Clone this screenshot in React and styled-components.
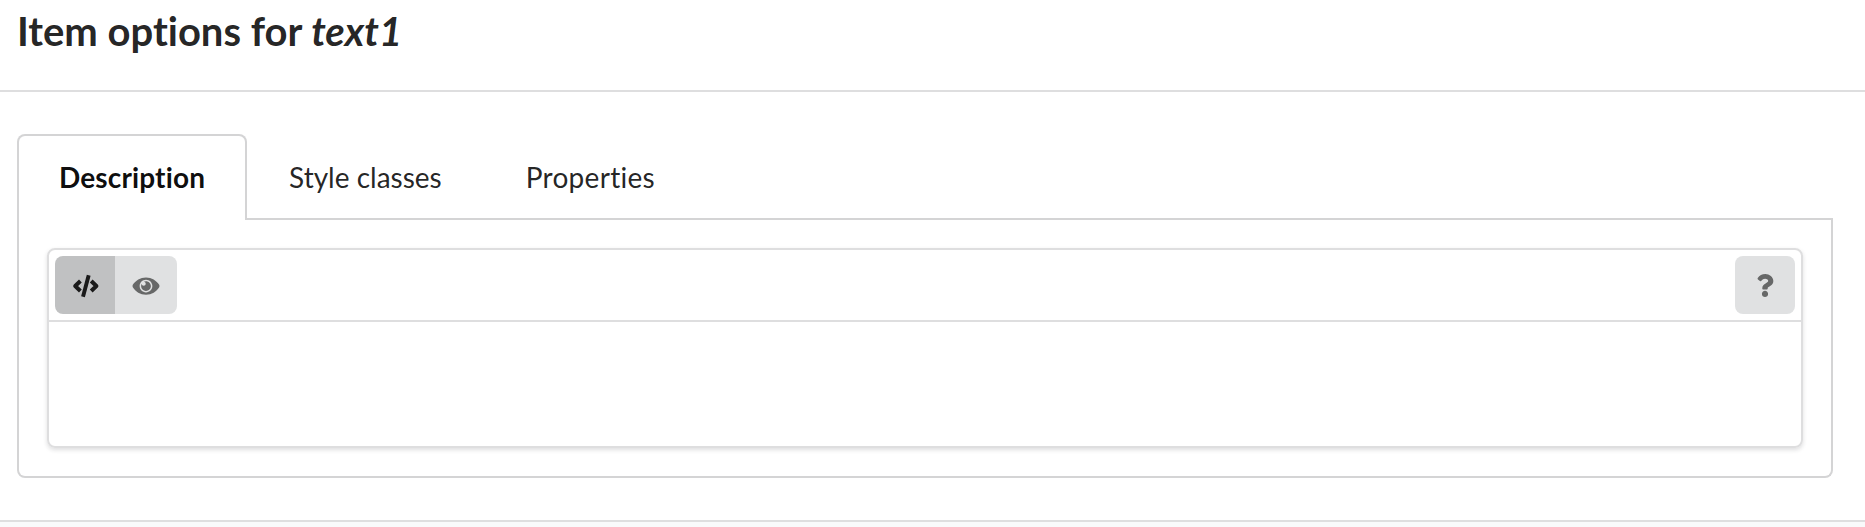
import React from "react";
import styled, { createGlobalStyle } from "styled-components";

const GlobalStyle = createGlobalStyle`
  *, *::before, *::after { box-sizing: border-box; }
  body {
    margin: 0;
    background: #fff;
    color: rgba(0, 0, 0, 0.87);
    font-family: Lato, "Liberation Sans", sans-serif;
    font-size: 28px;
    line-height: 40px;
    overflow: hidden;
    -webkit-font-smoothing: antialiased;
  }
`;

const Dialog = styled.main`
  display: flex;
  flex-direction: column;
  height: 527px;
`;

const Header = styled.header`
  height: 92px;
  padding: 6px 17px 0;
  border-bottom: 2px solid #dededf;
`;

const Title = styled.h1`
  margin: 0;
  font-size: 40px;
  font-weight: 700;
  line-height: 51px;
  letter-spacing: -0.02px;
  font-variant-ligatures: none;
`;

const Content = styled.section`
  height: 428px;
  padding: 42px 32px 0 17px;
`;

const TabList = styled.nav`
  display: flex;
  height: 86px;
  border-bottom: 2px solid #d4d4d5;
`;

const Tab = styled.button`
  height: 86px;
  margin: 0 0 -2px;
  padding: 0 40px 2px;
  border: 2px solid ${(p) => (p.$active ? "#d4d4d5" : "transparent")};
  border-bottom: 0;
  border-radius: 8px 8px 0 0;
  background: ${(p) => (p.$active ? "#fff" : "transparent")};
  color: ${(p) => (p.$active ? "rgba(0, 0, 0, 0.95)" : "rgba(0, 0, 0, 0.87)")};
  font: ${(p) => (p.$active ? 700 : 400)} 28px/40px Lato, "Liberation Sans", sans-serif;
  letter-spacing: ${(p) => p.$tracking || 0}px;
  font-variant-ligatures: none;
`;

const TabPanel = styled.div`
  height: 258px;
  padding: 28px;
  border: 2px solid #d4d4d5;
  border-top: 0;
  border-radius: 0 0 8px 8px;
`;

const Editor = styled.div`
  height: 200px;
  border: 2px solid #dededf;
  border-radius: 8px;
  box-shadow: 0 2px 4px 0 rgba(34, 36, 38, 0.15);
`;

const Toolbar = styled.div`
  display: flex;
  justify-content: space-between;
  height: 72px;
  padding: 6px;
  border-bottom: 2px solid #dededf;
`;

const ButtonGroup = styled.div`
  display: flex;
  height: 58px;
  overflow: hidden;
  border-radius: 8px;
`;

const IconButton = styled.button`
  display: flex;
  align-items: center;
  justify-content: center;
  width: ${(p) => p.$width || 60}px;
  height: 58px;
  padding: 1px 0 0;
  border: 0;
  background: ${(p) => (p.$active ? "#c0c1c2" : "#e0e1e2")};
  color: ${(p) => (p.$active ? "#1a1a1a" : "#676868")};
`;

const Glyph = styled.svg`
  display: block;
  overflow: visible;
`;

const Footer = styled.footer`
  height: 7px;
  border-top: 2px solid #dededf;
  background: #f9fafb;
`;

function CodeIcon() {
  return (
    <Glyph width="28" height="24" viewBox="0 0 28 24" fill="none" stroke="currentColor" strokeWidth="4" strokeLinejoin="round">
      <path d="M9.4 7 4.2 12l5.2 5M20.2 7 25.4 12l-5.2 5" />
      <path d="M17.7 1.2 12 22.8" strokeWidth="3.9" />
    </Glyph>
  );
}

function EyeIcon() {
  return (
    <Glyph width="28" height="24" viewBox="0 0 576 512" fill="currentColor">
      <path d="M569.354 231.631C512.969 135.949 407.81 72 288 72 168.14 72 63.004 135.994 6.646 231.631a47.999 47.999 0 0 0 0 48.739C63.031 376.051 168.19 440 288 440c119.86 0 224.996-63.994 281.354-159.631a47.997 47.997 0 0 0 0-48.738zM288 392c-75.162 0-136-60.827-136-136 0-75.162 60.826-136 136-136 75.162 0 136 60.826 136 136 0 75.162-60.826 136-136 136zm104-136c0 57.438-46.562 104-104 104s-104-46.562-104-104c0-17.708 4.431-34.379 12.236-48.973l-.001.032c0 23.651 19.173 42.823 42.824 42.823s42.824-19.173 42.824-42.823c0-23.651-19.173-42.824-42.824-42.824l-.032.001C253.621 156.431 270.292 152 288 152c57.438 0 104 46.562 104 104z" />
    </Glyph>
  );
}

function QuestionIcon() {
  return (
    <Glyph width="18" height="23" viewBox="0 0 384 512" fill="currentColor">
      <path d="M202.021 0C122.202 0 70.503 32.703 29.914 91.026c-7.363 10.58-5.093 25.086 5.178 32.874l43.138 32.709c10.373 7.865 25.132 6.026 33.253-4.148 25.049-31.381 43.63-49.449 82.757-49.449 30.764 0 68.816 19.799 68.816 49.631 0 22.552-18.617 34.134-48.993 51.164-35.423 19.86-82.299 44.576-82.299 106.405V320c0 13.255 10.745 24 24 24h72.471c13.255 0 24-10.745 24-24v-5.773c0-42.86 125.268-44.645 125.268-160.627C377.504 66.256 286.902 0 202.021 0zM192 373.459c-38.196 0-69.271 31.075-69.271 69.271 0 38.195 31.075 69.27 69.271 69.27s69.271-31.075 69.271-69.271-31.075-69.27-69.271-69.27z" />
    </Glyph>
  );
}

export default function App() {
  return (
    <>
      <GlobalStyle />
      <Dialog>
        <Header>
          <Title>
            Item options for <em>text1</em>
          </Title>
        </Header>
        <Content>
          <TabList>
            <Tab $active $tracking={0.14}>Description</Tab>
            <Tab>Style classes</Tab>
            <Tab $tracking={0.28}>Properties</Tab>
          </TabList>
          <TabPanel>
            <Editor>
              <Toolbar>
                <ButtonGroup>
                  <IconButton $active aria-label="Source">
                    <CodeIcon />
                  </IconButton>
                  <IconButton $width={62} aria-label="Preview">
                    <EyeIcon />
                  </IconButton>
                </ButtonGroup>
                <ButtonGroup>
                  <IconButton aria-label="Help">
                    <QuestionIcon />
                  </IconButton>
                </ButtonGroup>
              </Toolbar>
            </Editor>
          </TabPanel>
        </Content>
        <Footer />
      </Dialog>
    </>
  );
}
